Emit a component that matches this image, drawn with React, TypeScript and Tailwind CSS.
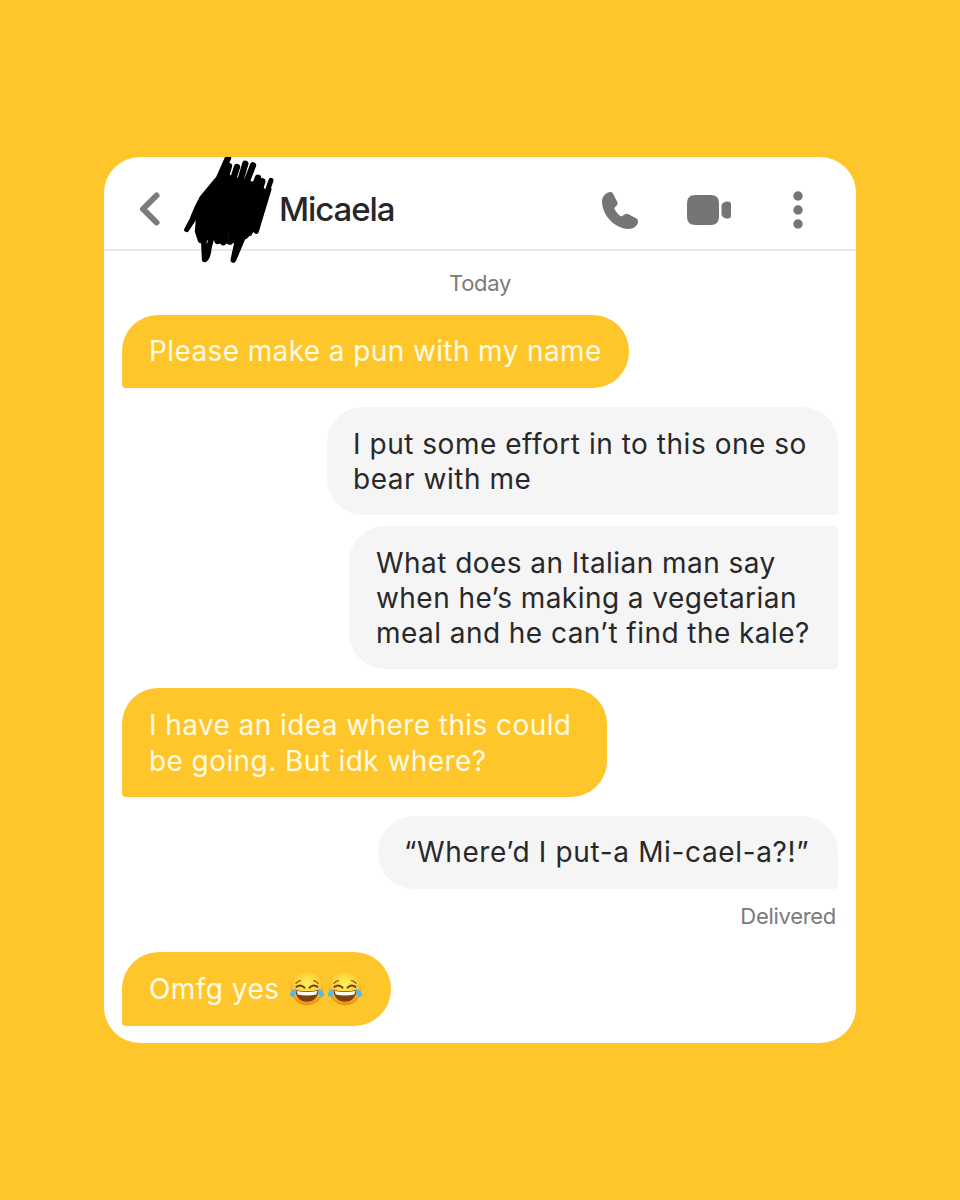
import { clsx } from 'clsx';

interface Message {
  id: number;
  mine: boolean;
  lines: string[];
  className: string;
}

const messages: Message[] = [
  {
    id: 1,
    mine: false,
    lines: ['Please make a pun with my name'],
    className: 'h-[73px] w-[507px] rounded-[36px] rounded-bl-[4px] tracking-[0.390px]',
  },
  {
    id: 2,
    mine: true,
    lines: ['I put some effort in to this one so', 'bear with me'],
    className: 'mt-[19px] h-[108px] w-[511px] rounded-[36px] rounded-br-[4px] pl-[26px] pt-[2px] tracking-[0.530px]',
  },
  {
    id: 3,
    mine: true,
    lines: [
      'What does an Italian man say',
      'when he’s making a vegetarian',
      'meal and he can’t find the kale?',
    ],
    className: 'mt-[11px] h-[143px] w-[489px] rounded-l-[36px] rounded-r-[4px] pl-[27px] pt-[2px] tracking-[0.450px]',
  },
  {
    id: 4,
    mine: false,
    lines: ['I have an idea where this could', 'be going. But idk where?'],
    className: 'mt-[19px] h-[109px] w-[485px] rounded-[36px] rounded-bl-[4px] pt-[2px] tracking-[0.420px]',
  },
  {
    id: 5,
    mine: true,
    lines: ['“Where’d I put-a Mi-cael-a?!”'],
    className: 'mt-[19px] h-[73px] w-[460px] rounded-[36px] rounded-br-[4px] pl-[26px] tracking-[0.640px]',
  },
];

function LaughEmoji() {
  return (
    <svg viewBox="0 0 38 36" className="h-9 w-[38px] shrink-0">
      <defs>
        <radialGradient id="face" cx="0.5" cy="0.35" r="0.65">
          <stop offset="0" stopColor="#fff05a" />
          <stop offset="0.6" stopColor="#fdcf38" />
          <stop offset="1" stopColor="#e98a14" />
        </radialGradient>
      </defs>
      <circle cx="19" cy="18" r="16.3" fill="url(#face)" />
      <path
        d="M8 12.400q1.500-2.200 4.500-2.800M30 12.400q-1.500-2.200-4.500-2.800"
        fill="none"
        stroke="#9a6212"
        strokeWidth="1.300"
        strokeLinecap="round"
      />
      <path
        d="M8.500 15.800q4.500-3 8 .9M29.500 15.800q-4.500-3-8 .9"
        fill="none"
        stroke="#6b3d0c"
        strokeWidth="2"
        strokeLinecap="round"
      />
      <path d="M7.500 19q11.500 2.400 23 0c0 6.900-4.800 11.800-11.500 11.800S7.500 25.900 7.500 19z" fill="#80410d" />
      <path d="M8.700 20q10.300 2.100 20.600 0l-1 3.600q-9.300 2-18.600 0z" fill="#fffdf2" />
      <path d="M8 18c-3 .3-5.700 2.500-6 5-.3 2.500 1.900 3.600 3.800 2.400 1.900-1.300 2.500-4.200 2.200-7.400z" fill="#57b9e8" />
      <path d="M30 18c3 .3 5.700 2.500 6 5 .3 2.500-1.900 3.600-3.800 2.400-1.900-1.300-2.500-4.200-2.200-7.400z" fill="#57b9e8" />
    </svg>
  );
}

// Hand scrawled cover over the avatar
function Scribble() {
  return (
    <svg
      viewBox="0 15 300 330"
      className="absolute left-[76px] top-0 h-[110px] w-[100px]"
      fill="none"
      stroke="#000"
      strokeWidth="19"
      strokeLinecap="round"
      strokeLinejoin="round"
    >
      <path
        d="M112 85L135 70L150 80L185 90L225 100L246 115L236 180L220 228L195 252L172 260L150 266L114 266L100 246L72 260L58 240L58 190L68 138Z"
        fill="#000"
      />
      <path d="M144 18L112 90M147 42L130 100M171 45L150 110M196 35L174 110M219 40L192 110" />
      <path d="M234 77L205 150M247 88L222 170" />
      <path d="M273 85L252 145L222 232M267 112L229 238" strokeWidth="15" />
      <path d="M66 138Q50 165 36 203L20 233L68 160" strokeWidth="15" />
      <path d="M57 190L53 238L62 265M71 255L74 322Q84 318 87 285L98 245" strokeWidth="17" />
      <path d="M112 240L112 268M132 240L130 272M152 240L150 270M215 225L188 258L160 324L176 250" strokeWidth="17" />
      <path d="M144 238L147 272M215 244L212 250" stroke="#240501" strokeWidth="4" />
    </svg>
  );
}

function Header() {
  return (
    <header className="relative flex h-[94px] shrink-0 items-center border-b-2 border-[#e8e8e8]">
      <svg
        viewBox="0 0 24 36"
        className="ml-[34px] mt-[12px] h-9 w-6"
        fill="none"
        stroke="#7b7b7b"
        strokeWidth="6"
        strokeLinecap="round"
        strokeLinejoin="round"
      >
        <path d="M18.500 4.500L5 18l13.500 13.500" />
      </svg>
      <Scribble />
      <h1 className="ml-[117px] mt-[12px] text-[33px] font-medium leading-10 tracking-[-1.1px] text-[#272729]">
        Micaela
      </h1>
      <div className="ml-auto mr-[49px] mt-[13px] flex items-center text-[#757575]">
        <svg viewBox="0 0 38 38" className="h-[38px] w-[38px]" fill="currentColor">
          <path d="M9.500 1C5 1 1 5.500 1 10.500C1 24 14 38 27.500 38C32.500 38 37 34.500 37 30.500C37 28.800 36.300 28 35 27.200L28.500 23.700C26.500 22.600 25 22.400 23.500 23.600L21.300 25C20.500 25.500 19.800 25.300 19 24.700C16.500 22.700 14.800 20.500 13.700 18.200C13.300 17.400 13.500 16.800 14.200 16.100L15.700 14.400C16.900 13 16.900 12 16 10.400L12.500 3.500C11.700 1.800 11 1 9.500 1Z" />
        </svg>
        <svg viewBox="0 0 45 30" className="ml-[48px] h-[30px] w-[45px]" fill="currentColor">
          <path d="M8.500 0H23.500C29.500 0 32 3 32 9V21C32 27 29.500 30 23.500 30H8.500C2.500 30 0 27 0 21V9C0 3 2.500 0 8.500 0Z" />
          <path d="M34.500 11.500C34.500 8 37 6.500 41 6.500C43 6.500 44 7.500 44 9.500V20.500C44 22.500 43 23.500 41 23.500C37 23.500 34.500 22 34.500 18.500Z" />
        </svg>
        <svg viewBox="0 0 18 38" className="ml-[57px] h-[38px] w-[18px]" fill="currentColor">
          <circle cx="9" cy="5" r="4.700" />
          <circle cx="9" cy="19" r="4.700" />
          <circle cx="9" cy="33" r="4.700" />
        </svg>
      </div>
    </header>
  );
}

function Bubble({ message }: { message: Message }) {
  return (
    <div
      className={clsx(
        'flex flex-col justify-center whitespace-nowrap text-[28px] leading-[35.300px]',
        message.mine
          ? 'self-end bg-[#f5f5f5] text-[#28282a]'
          : 'self-start bg-[#fec62b] pl-[27px] text-[#fffbe3]',
        message.className
      )}
    >
      {message.lines.map((line) => (
        <p key={line}>{line}</p>
      ))}
    </div>
  );
}

export default function App() {
  return (
    <div className="flex h-[1200px] w-[960px] flex-col items-center bg-[#fec62b] pt-[157px] font-['Inter',sans-serif]">
      <div className="flex h-[886px] w-[752px] flex-col overflow-hidden rounded-[36px] bg-white">
        <Header />

        {/* Conversation */}
        <main className="flex flex-col px-[18px]">
          <p className="mt-[18px] h-[46px] text-center text-[22px] leading-[28px] tracking-[-0.300px] text-[#7b7b7b]">
            Today
          </p>
          {messages.map((message) => (
            <Bubble key={message.id} message={message} />
          ))}
          <p className="mr-[2px] mt-[13px] self-end text-[22px] leading-[28px] tracking-[-0.300px] text-[#7b7b7b]">
            Delivered
          </p>
          <div className="mt-[22px] flex h-[74px] w-[269px] items-center self-start rounded-[37px] rounded-bl-[4px] bg-[#fec62b] pl-[27px] text-[28px] leading-[35px] tracking-[0.450px] text-[#fffbe3]">
            <span>Omfg yes</span>
            <span className="ml-[9px] flex">
              <LaughEmoji />
              <LaughEmoji />
            </span>
          </div>
        </main>
      </div>
    </div>
  );
}
